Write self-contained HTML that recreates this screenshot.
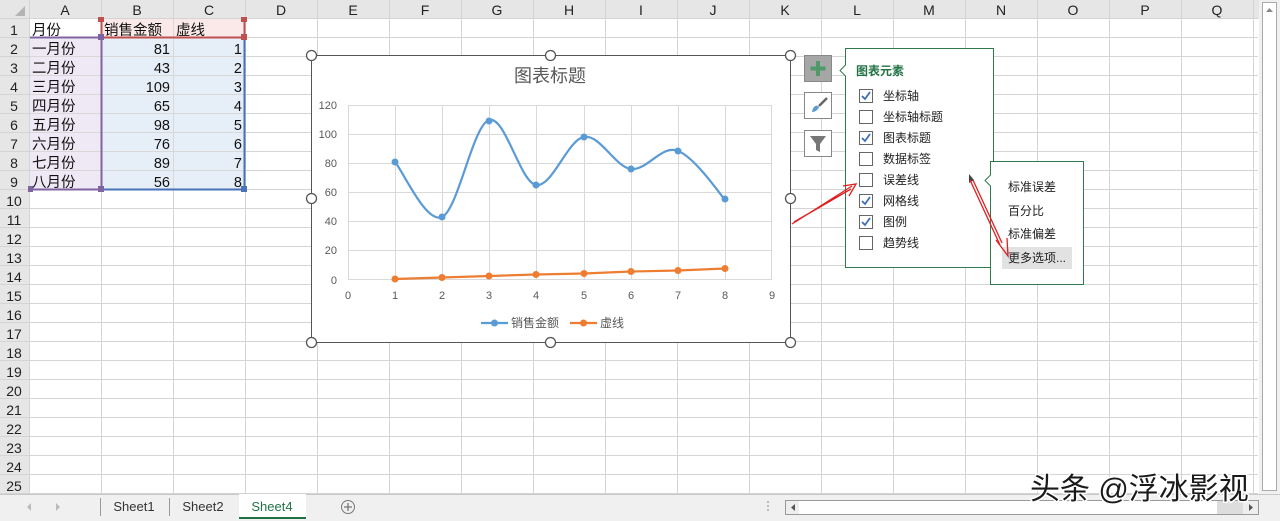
<!DOCTYPE html>
<html><head><meta charset="utf-8"><style>
html,body{margin:0;padding:0;width:1280px;height:521px;overflow:hidden;background:#fff}
svg{display:block}
text{font-family:"Liberation Sans","Noto Sans CJK SC",sans-serif}
</style></head><body>
<svg width="1280" height="521" viewBox="0 0 1280 521" xmlns="http://www.w3.org/2000/svg">
<rect width="1280" height="521" fill="#fff"/>
<rect x="0" y="0" width="1260" height="19" fill="#e6e6e6"/>
<rect x="0" y="0" width="29" height="494" fill="#e6e6e6"/>
<polygon points="25,6 25,16 15,16" fill="#b4b4b4"/>
<g stroke="#d4d4d4" stroke-width="1">
<path d="M29.5 0V494M101.5 0V494M173.5 0V494M245.5 0V494M317.5 0V494M389.5 0V494M461.5 0V494M533.5 0V494M605.5 0V494M677.5 0V494M749.5 0V494M821.5 0V494M893.5 0V494M965.5 0V494M1037.5 0V494M1109.5 0V494M1181.5 0V494M1253.5 0V494"/>
<path d="M0 18.5H1258M0 37.5H1258M0 56.5H1258M0 75.5H1258M0 94.5H1258M0 113.5H1258M0 132.5H1258M0 151.5H1258M0 170.5H1258M0 189.5H1258M0 208.5H1258M0 227.5H1258M0 246.5H1258M0 265.5H1258M0 284.5H1258M0 303.5H1258M0 322.5H1258M0 341.5H1258M0 360.5H1258M0 379.5H1258M0 398.5H1258M0 417.5H1258M0 436.5H1258M0 455.5H1258M0 474.5H1258M0 493.5H1258"/>
</g>
<g font-size="14" fill="#222" text-anchor="middle">
<text x="65" y="15">A</text><text x="137" y="15">B</text><text x="209" y="15">C</text><text x="281" y="15">D</text><text x="353" y="15">E</text><text x="425" y="15">F</text><text x="497" y="15">G</text><text x="569" y="15">H</text><text x="641" y="15">I</text><text x="713" y="15">J</text><text x="785" y="15">K</text><text x="857" y="15">L</text><text x="929" y="15">M</text><text x="1001" y="15">N</text><text x="1073" y="15">O</text><text x="1145" y="15">P</text><text x="1217" y="15">Q</text>
<text x="14" y="35">1</text><text x="14" y="54">2</text><text x="14" y="73">3</text><text x="14" y="92">4</text><text x="14" y="111">5</text><text x="14" y="130">6</text><text x="14" y="149">7</text><text x="14" y="168">8</text><text x="14" y="187">9</text><text x="14" y="206">10</text><text x="14" y="225">11</text><text x="14" y="244">12</text><text x="14" y="263">13</text><text x="14" y="282">14</text><text x="14" y="301">15</text><text x="14" y="320">16</text><text x="14" y="339">17</text><text x="14" y="358">18</text><text x="14" y="377">19</text><text x="14" y="396">20</text><text x="14" y="415">21</text><text x="14" y="434">22</text><text x="14" y="453">23</text><text x="14" y="472">24</text><text x="14" y="491">25</text>
</g>
<rect x="30" y="38" width="71" height="152" fill="#efe9f5"/>
<rect x="102" y="19" width="143" height="19" fill="#fbe9e9"/>
<rect x="102" y="38" width="143" height="152" fill="#e6eef8"/>
<g stroke="#d8d8d8"><path d="M101.5 19V190M173.5 19V190"/><path d="M30 56.5H245M30 75.5H245M30 94.5H245M30 113.5H245M30 132.5H245M30 151.5H245M30 170.5H245"/></g>
<path d="M30 37.5H101.5V189.5H30" fill="none" stroke="#8064a2" stroke-width="2"/>
<path d="M101 37.5H245M244.5 19V38M101.5 19V38" fill="none" stroke="#c0504d" stroke-width="2"/>
<path d="M102 189.5H244.5V38" fill="none" stroke="#4a72b8" stroke-width="2"/>
<rect x="98" y="34" width="6" height="6" fill="#8064a2"/><rect x="98" y="186" width="6" height="6" fill="#8064a2"/><rect x="28" y="186" width="5" height="6" fill="#8064a2"/>
<rect x="241" y="34" width="6" height="6" fill="#c0504d"/><rect x="98" y="17" width="6" height="5" fill="#c0504d"/><rect x="241" y="17" width="6" height="5" fill="#c0504d"/>
<rect x="241" y="186" width="6" height="6" fill="#4a72b8"/>
<g font-size="14.5" fill="#111">
<text x="32" y="35">月份</text><text x="104" y="35">销售金额</text><text x="176" y="35">虚线</text>
<text x="32" y="54">一月份</text><text x="32" y="73">二月份</text><text x="32" y="92">三月份</text><text x="32" y="111">四月份</text><text x="32" y="130">五月份</text><text x="32" y="149">六月份</text><text x="32" y="168">七月份</text><text x="32" y="187">八月份</text>
</g>
<g font-size="14.5" fill="#111" text-anchor="end">
<text x="170" y="54">81</text><text x="170" y="73">43</text><text x="170" y="92">109</text><text x="170" y="111">65</text><text x="170" y="130">98</text><text x="170" y="149">76</text><text x="170" y="168">89</text><text x="170" y="187">56</text>
<text x="242" y="54">1</text><text x="242" y="73">2</text><text x="242" y="92">3</text><text x="242" y="111">4</text><text x="242" y="130">5</text><text x="242" y="149">6</text><text x="242" y="168">7</text><text x="242" y="187">8</text>
</g>
<rect x="311.5" y="55.5" width="479" height="287" fill="#fff" stroke="#555" stroke-width="1"/>
<g fill="#fff" stroke="#555" stroke-width="1.3">
<circle cx="311.5" cy="55.5" r="5"/><circle cx="550.5" cy="55.5" r="5"/><circle cx="790.5" cy="55.5" r="5"/>
<circle cx="311.5" cy="198.5" r="5"/><circle cx="790.5" cy="198.5" r="5"/>
<circle cx="311.5" cy="342.5" r="5"/><circle cx="550.5" cy="342.5" r="5"/><circle cx="790.5" cy="342.5" r="5"/>
</g>
<text x="550" y="82" font-size="18" fill="#595959" text-anchor="middle">图表标题</text>
<g stroke="#d9d9d9" stroke-width="1">
<path d="M348 105.5H772M348 134.5H772M348 163.5H772M348 192.5H772M348 221.5H772M348 250.5H772M348 279.5H772"/>
<path d="M348.5 105V280M395.5 105V280M442.5 105V280M489.5 105V280M536.5 105V280M584.5 105V280M631.5 105V280M678.5 105V280M725.5 105V280M771.5 105V280"/>
</g>
<g font-size="11" fill="#595959" text-anchor="end">
<text x="337" y="109">120</text><text x="337" y="138">100</text><text x="337" y="167">80</text><text x="337" y="196">60</text><text x="337" y="225">40</text><text x="337" y="254">20</text><text x="337" y="284">0</text>
</g>
<g font-size="11" fill="#595959" text-anchor="middle">
<text x="348" y="299">0</text><text x="395" y="299">1</text><text x="442" y="299">2</text><text x="489" y="299">3</text><text x="536" y="299">4</text><text x="584" y="299">5</text><text x="631" y="299">6</text><text x="678" y="299">7</text><text x="725" y="299">8</text><text x="772" y="299">9</text>
</g>
<path d="M395 162C403 171 426 224 442 217C458 210 473 125 489 120C505 115 520 182 536 185C552 188 568 139 584 137C600 134 615 167 631 169C647 171 662 144 678 151C694 157 717 190 725 200" fill="none" stroke="#5b9bd5" stroke-width="2.2"/>
<g fill="#5b9bd5"><circle cx="395" cy="162" r="3.5"/><circle cx="442" cy="217" r="3.5"/><circle cx="489" cy="121" r="3.5"/><circle cx="536" cy="185" r="3.5"/><circle cx="584" cy="137" r="3.5"/><circle cx="631" cy="169" r="3.5"/><circle cx="678" cy="151" r="3.5"/><circle cx="725" cy="199" r="3.5"/></g>
<path d="M395 279L442 277.5L489 276L536 274.5L584 273.5L631 271.5L678 270.5L725 268.5" fill="none" stroke="#ed7d31" stroke-width="2.2"/>
<g fill="#ed7d31"><circle cx="395" cy="279" r="3.5"/><circle cx="442" cy="277.5" r="3.5"/><circle cx="489" cy="276" r="3.5"/><circle cx="536" cy="274.5" r="3.5"/><circle cx="584" cy="273.5" r="3.5"/><circle cx="631" cy="271.5" r="3.5"/><circle cx="678" cy="270.5" r="3.5"/><circle cx="725" cy="268.5" r="3.5"/></g>
<path d="M481 323H508" stroke="#5b9bd5" stroke-width="2.2"/><circle cx="494.5" cy="323" r="3.5" fill="#5b9bd5"/>
<text x="511" y="327" font-size="12" fill="#595959">销售金额</text>
<path d="M570 323H597" stroke="#ed7d31" stroke-width="2.2"/><circle cx="583.5" cy="323" r="3.5" fill="#ed7d31"/>
<text x="600" y="327" font-size="12" fill="#595959">虚线</text>
<rect x="804.5" y="55.5" width="27" height="26" fill="#a6a6a6" stroke="#888"/>
<path d="M818 61V76M810.5 68.5H825.5" stroke="#4f9a68" stroke-width="4"/>
<rect x="804.5" y="92.5" width="27" height="26" fill="#fff" stroke="#888"/>
<path d="M812 112C813 106 817 104 819 107C818 110 815 112 812 112Z" fill="#5b9bd5"/><path d="M819 106L827 98" stroke="#666" stroke-width="2.5"/>
<rect x="804.5" y="130.5" width="27" height="26" fill="#fff" stroke="#888"/>
<path d="M810 136H826L820 144V152L816 150V144Z" fill="#777"/>
<path d="M845.5 48.5H993.5V267.5H845.5V76L840 70.5L845.5 65Z" fill="#fff" stroke="#2e7a4e"/>
<text x="856" y="75" font-size="12" font-weight="bold" fill="#217346">图表元素</text>
<g stroke="#666" fill="#fff"><rect x="859.5" y="89.5" width="13" height="13"/><rect x="859.5" y="110.5" width="13" height="13"/><rect x="859.5" y="131.5" width="13" height="13"/><rect x="859.5" y="152.5" width="13" height="13"/><rect x="859.5" y="173.5" width="13" height="13"/><rect x="859.5" y="194.5" width="13" height="13"/><rect x="859.5" y="215.5" width="13" height="13"/><rect x="859.5" y="236.5" width="13" height="13"/></g>
<g stroke="#3d6fb4" stroke-width="1.8" fill="none"><path d="M862 96L865 99L870 92"/><path d="M862 138L865 141L870 134"/><path d="M862 201L865 204L870 197"/><path d="M862 222L865 225L870 218"/></g>
<g font-size="12" fill="#222"><text x="883" y="100">坐标轴</text><text x="883" y="121">坐标轴标题</text><text x="883" y="142">图表标题</text><text x="883" y="163">数据标签</text><text x="883" y="184">误差线</text><text x="883" y="205">网格线</text><text x="883" y="226">图例</text><text x="883" y="247">趋势线</text></g>
<polygon points="969,174 974,180 969,183" fill="#444"/>
<path d="M990.5 161.5H1083.5V284.5H990.5V186L985 180.5L990.5 175Z" fill="#fff" stroke="#2e7a4e"/>
<rect x="1002" y="247" width="70" height="22" fill="#e2e2e2"/>
<g font-size="12" fill="#222"><text x="1008" y="191">标准误差</text><text x="1008" y="215">百分比</text><text x="1008" y="238">标准偏差</text><text x="1008" y="262">更多选项...</text></g>
<g stroke="#e02020" stroke-width="1.3" fill="none">
<path d="M792 224L852 186M794 222L851 189"/><path d="M843 186L856 184L849 196"/>
<path d="M970 180L1000 245M973 180L1002 243"/><path d="M996 240L1008 256L1007 238"/>
</g>
<rect x="1259" y="0" width="21" height="494" fill="#f0f0f0"/>
<rect x="1262.5" y="2.5" width="14" height="488" fill="#fff" stroke="#aaa"/>
<polygon points="1266,12 1273,12 1269.5,8" fill="#888"/>
<rect x="0" y="494" width="1280" height="27" fill="#f0f0f0"/>
<line x1="0" y1="494.5" x2="1280" y2="494.5" stroke="#c8c8c8"/>
<polygon points="31,503 31,511 27,507" fill="#bbb"/><polygon points="56,503 56,511 60,507" fill="#bbb"/>
<path d="M100.5 498V516M169.5 498V516" stroke="#999"/>
<rect x="239" y="494" width="67" height="24" fill="#fff"/>
<path d="M239 518H306" stroke="#217346" stroke-width="2"/>
<g font-size="13" text-anchor="middle"><text x="134" y="511" fill="#333">Sheet1</text><text x="203" y="511" fill="#333">Sheet2</text><text x="272" y="511" fill="#217346">Sheet4</text></g>
<circle cx="348" cy="507" r="6.5" fill="none" stroke="#777"/><path d="M348 503V511M344 507H352" stroke="#777" stroke-width="1.3"/>
<g fill="#bbb"><rect x="767" y="501" width="2" height="2"/><rect x="767" y="505" width="2" height="2"/><rect x="767" y="509" width="2" height="2"/></g>
<rect x="785.5" y="500.5" width="473" height="14" fill="#fff" stroke="#999"/>
<rect x="786" y="501" width="13" height="13" fill="#eee"/><polygon points="795,504 795,511 791,507.5" fill="#555"/>
<rect x="1217" y="501" width="26" height="13" fill="#ddd"/>
<rect x="1243" y="501" width="15" height="13" fill="#eee"/><polygon points="1249,504 1249,511 1253,507.5" fill="#555"/>
<text x="1030" y="499" font-size="30" fill="#1a1a1a" stroke="#fff" stroke-width="3" paint-order="stroke">头条 @浮冰影视</text>
</svg>
</body></html>
